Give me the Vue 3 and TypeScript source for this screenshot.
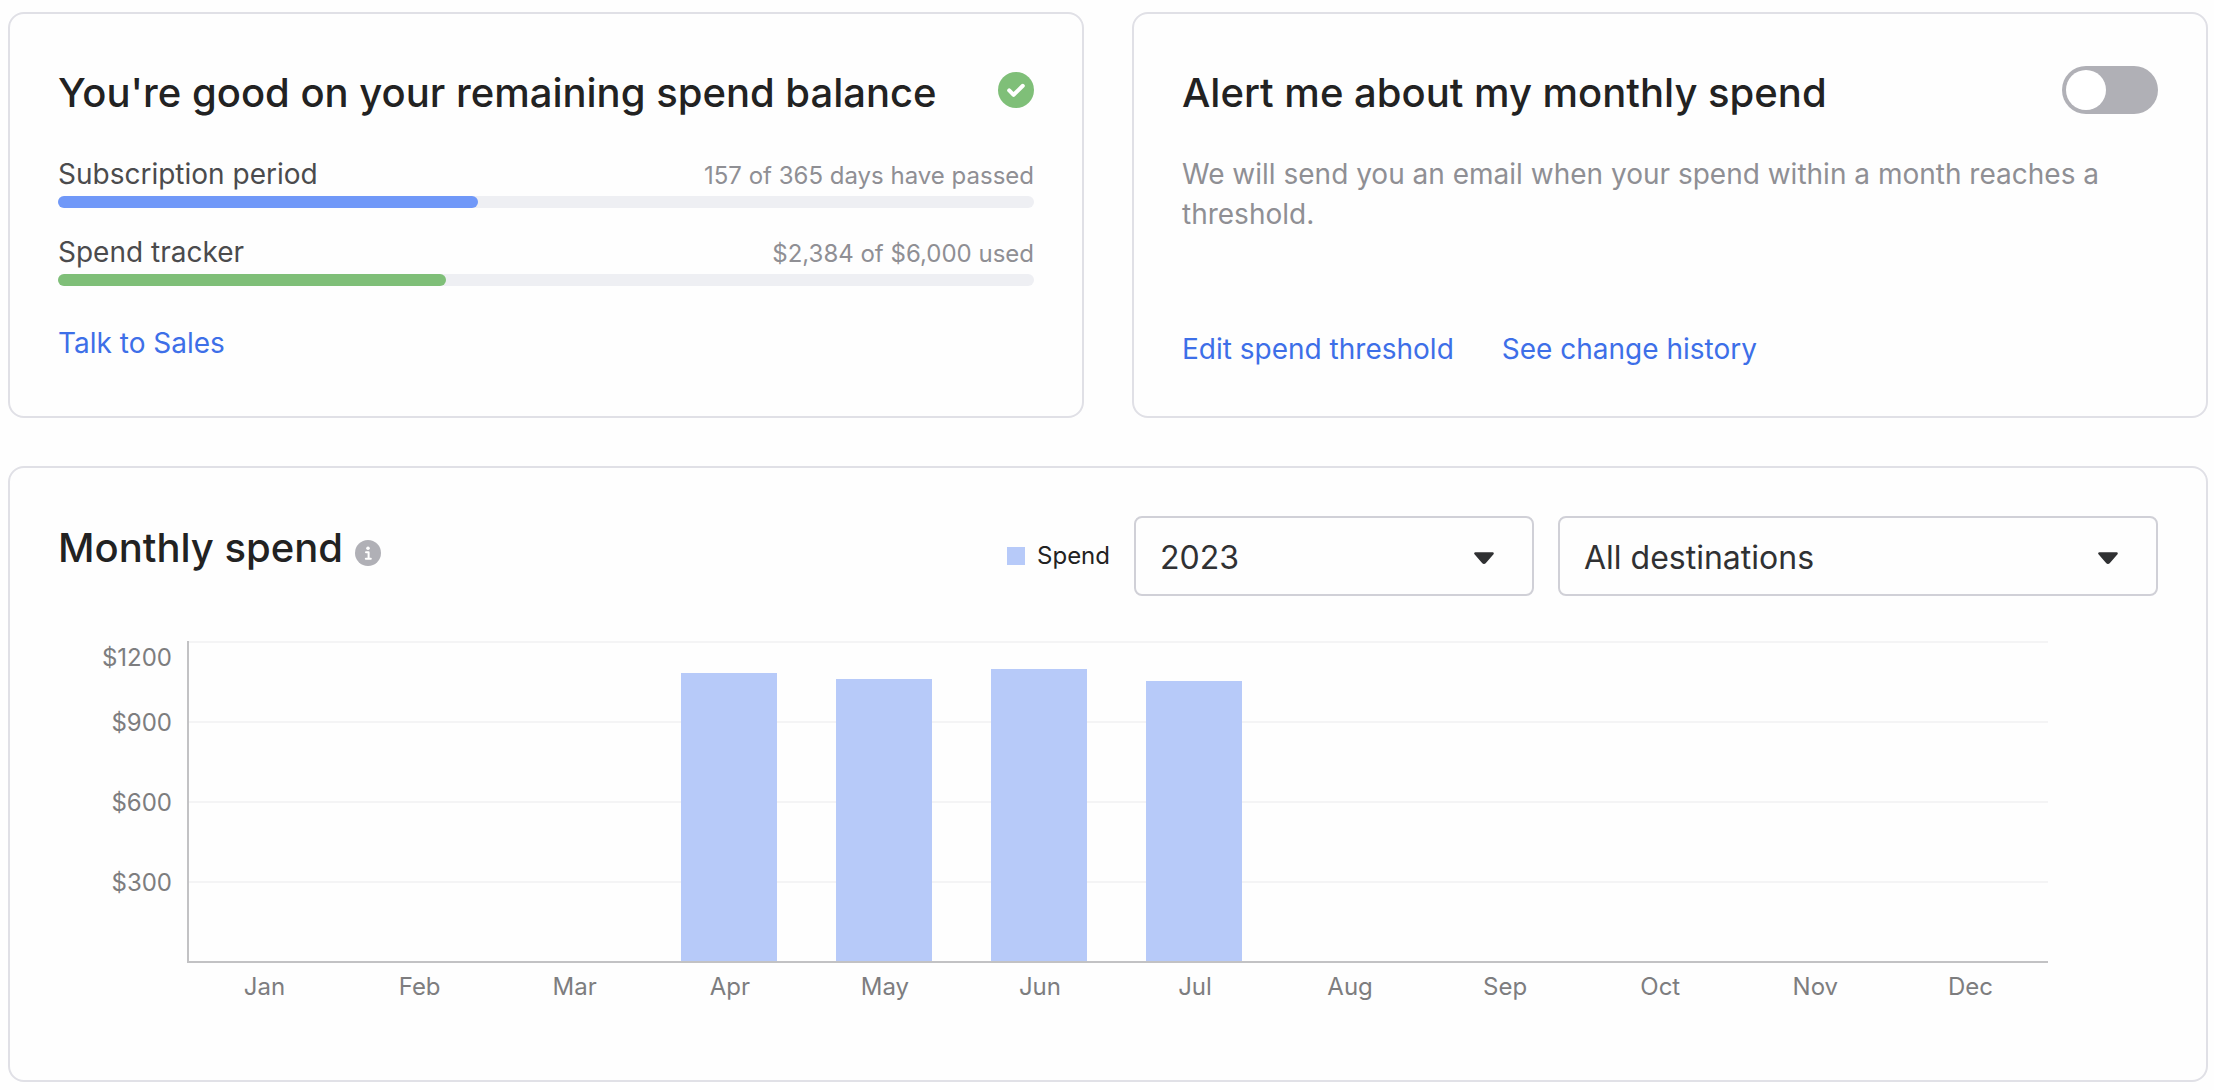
<script setup lang="ts">
import { computed, ref } from 'vue'

interface Meter {
  id: string
  label: string
  caption: string
  value: number
  max: number
  tone: 'blue' | 'green'
}

interface MonthSpend {
  month: string
  amount: number
}

const meters: Meter[] = [
  { id: 'period', label: 'Subscription period', caption: '157 of 365 days have passed', value: 157, max: 365, tone: 'blue' },
  { id: 'spend', label: 'Spend tracker', caption: '$2,384 of $6,000 used', value: 2384, max: 6000, tone: 'green' },
]

const alertEnabled = ref(false)
const year = ref('2023')
const destination = ref('All destinations')

const scaleMax = 1200
const ticks = [1200, 900, 600, 300]

const months: MonthSpend[] = [
  { month: 'Jan', amount: 0 },
  { month: 'Feb', amount: 0 },
  { month: 'Mar', amount: 0 },
  { month: 'Apr', amount: 1080 },
  { month: 'May', amount: 1058 },
  { month: 'Jun', amount: 1095 },
  { month: 'Jul', amount: 1050 },
  { month: 'Aug', amount: 0 },
  { month: 'Sep', amount: 0 },
  { month: 'Oct', amount: 0 },
  { month: 'Nov', amount: 0 },
  { month: 'Dec', amount: 0 },
]

const bars = computed(() =>
  months.map((m) => ({ ...m, height: `${(m.amount / scaleMax) * 100}%` })),
)
</script>

<template>
  <main class="page">
    <div class="cards">
      <section class="card">
        <header class="card-header">
          <h2 class="title">You're good on your remaining spend balance</h2>
          <svg class="status" viewBox="0 0 36 36" role="img" aria-label="On track">
            <circle cx="18" cy="18" r="18" fill="#7fbf78" />
            <path d="M11.2 18.4l4.4 4.4 9.2-9" fill="none" stroke="#fff" stroke-width="4" stroke-linecap="round" stroke-linejoin="round" />
          </svg>
        </header>
        <div v-for="m in meters" :key="m.id" class="meter">
          <div class="meter-text">
            <span :id="`${m.id}-label`" class="meter-label">{{ m.label }}</span>
            <span class="meter-caption">{{ m.caption }}</span>
          </div>
          <div
            class="track"
            role="progressbar"
            :aria-labelledby="`${m.id}-label`"
            :aria-valuenow="m.value"
            aria-valuemin="0"
            :aria-valuemax="m.max"
          >
            <div class="fill" :class="m.tone" :style="{ width: `${(m.value / m.max) * 100}%` }"></div>
          </div>
        </div>
        <nav class="links sales">
          <a href="#sales">Talk to Sales</a>
        </nav>
      </section>

      <section class="card">
        <header class="card-header">
          <h2 class="title"><label for="alert-toggle">Alert me about my monthly spend</label></h2>
          <input id="alert-toggle" v-model="alertEnabled" class="toggle" type="checkbox" role="switch" />
        </header>
        <p class="description">We will send you an email when your spend within a month reaches a threshold.</p>
        <nav class="links alerts">
          <a href="#threshold">Edit spend threshold</a>
          <a href="#history">See change history</a>
        </nav>
      </section>
    </div>

    <section class="card spend">
      <header class="spend-header">
        <div class="spend-title">
          <h2 class="title">Monthly spend</h2>
          <button class="info" type="button" aria-label="About monthly spend">
            <svg viewBox="0 0 26 26" aria-hidden="true">
              <circle cx="13" cy="13" r="13" fill="#b0b0b6" />
              <circle cx="13" cy="8.2" r="1.8" fill="#fff" />
              <path d="M11 12.2h2.6v6M10.8 18.8h5" fill="none" stroke="#fff" stroke-width="2" stroke-linecap="round" stroke-linejoin="round" />
            </svg>
          </button>
        </div>
        <div class="legend"><span class="swatch"></span>Spend</div>
        <div class="select year">
          <select v-model="year" aria-label="Year">
            <option>2023</option>
            <option>2022</option>
          </select>
          <svg class="caret" viewBox="0 0 20 12" aria-hidden="true">
            <path d="M1.4 1.4h17.2l-7.6 8.8q-1 1.2-2 0z" fill="#303133" stroke="#303133" stroke-width="2.4" stroke-linejoin="round" />
          </svg>
        </div>
        <div class="select destination">
          <select v-model="destination" aria-label="Destination">
            <option>All destinations</option>
          </select>
          <svg class="caret" viewBox="0 0 20 12" aria-hidden="true">
            <path d="M1.4 1.4h17.2l-7.6 8.8q-1 1.2-2 0z" fill="#303133" stroke="#303133" stroke-width="2.4" stroke-linejoin="round" />
          </svg>
        </div>
      </header>

      <div class="chart">
        <ul class="y-axis">
          <li v-for="t in ticks" :key="t">${{ t }}</li>
        </ul>
        <div class="plot">
          <div class="gridlines" aria-hidden="true">
            <div v-for="t in ticks" :key="t" class="gridline"></div>
          </div>
          <div class="bars">
            <div v-for="b in bars" :key="b.month" class="slot">
              <div class="bar" :style="{ height: b.height }"></div>
            </div>
          </div>
        </div>
        <ul class="x-axis">
          <li v-for="b in bars" :key="b.month">{{ b.month }}</li>
        </ul>
      </div>
    </section>
  </main>
</template>

<style>
body {
  margin: 0;
  background: #fefefe;
}
</style>

<style scoped>
.page {
  box-sizing: border-box;
  padding: 12px 6px 8px 8px;
  font-family: Inter, "Open Sans", sans-serif;
  font-weight: 400;
  color: #222;
}

.cards {
  display: grid;
  grid-template-columns: 1fr 1fr;
  gap: 48px;
  margin-bottom: 48px;
}

.card {
  box-sizing: border-box;
  display: flex;
  flex-direction: column;
  padding: 52px 48px 47px;
  border: 2px solid #e0e0e6;
  border-radius: 16px;
}

.card-header {
  display: flex;
  align-items: center;
  justify-content: space-between;
  min-height: 48px;
  margin-bottom: 40px;
}

.title {
  margin: 0;
  padding-top: 6px;
  font-size: 40px;
  line-height: 42px;
  font-weight: 500;
}

.status {
  flex: none;
  width: 36px;
  height: 36px;
}

.meter {
  margin-bottom: 24px;
}

.meter-text {
  display: flex;
  align-items: baseline;
  justify-content: space-between;
  height: 40px;
  margin-bottom: 2px;
  line-height: 40px;
}

.meter-label {
  font-size: 28px;
  color: #4b4b4d;
}

.meter-caption {
  font-size: 24px;
  color: #8f8f94;
}

.track {
  height: 12px;
  border-radius: 6px;
  background: #eeeff3;
}

.fill {
  height: 12px;
  border-radius: 6px;
}

.blue {
  background: #7098f8;
}

.green {
  background: #7fbf78;
}

.links {
  display: flex;
  gap: 48px;
  font-size: 28px;
  line-height: 40px;
}

.links a {
  color: #3d6fe8;
  text-decoration: none;
}

.sales {
  margin-top: 13px;
}

.alerts {
  margin-top: 95px;
}

.description {
  margin: 0;
  font-size: 28px;
  line-height: 40px;
  color: #8f8f94;
}

.toggle {
  appearance: none;
  flex: none;
  display: flex;
  box-sizing: border-box;
  width: 96px;
  height: 48px;
  margin: 0;
  padding: 4px;
  border-radius: 24px;
  background: #b0b0b6;
  cursor: pointer;
}

.toggle::before {
  content: "";
  width: 40px;
  height: 40px;
  border-radius: 50%;
  background: #fff;
}

.toggle:checked {
  justify-content: flex-end;
  background: #7098f8;
}

.spend {
  padding: 48px 48px 77px;
}

.spend-header {
  display: flex;
  align-items: center;
  gap: 24px;
  margin-bottom: 45px;
}

.spend-title {
  display: flex;
  align-items: center;
  gap: 12px;
  margin-right: auto;
  padding-bottom: 22px;
}

.info {
  display: flex;
  margin: 16px 0 0;
  padding: 0;
  border: 0;
  background: none;
}

.info svg {
  width: 26px;
  height: 26px;
}

.legend {
  display: flex;
  align-items: center;
  gap: 12px;
  font-size: 24px;
  line-height: 32px;
}

.swatch {
  width: 18px;
  height: 18px;
  background: #b7caf9;
}

.select {
  position: relative;
  flex: 0 1 auto;
}

.year {
  width: 400px;
}

.destination {
  width: 600px;
}

.select select {
  appearance: none;
  box-sizing: border-box;
  width: 100%;
  height: 80px;
  margin: 0;
  padding: 2px 72px 0 24px;
  border: 2px solid #d0d0d7;
  border-radius: 8px;
  background: #fefefe;
  font-family: inherit;
  font-size: 32px;
  font-weight: inherit;
  color: #303133;
}

.caret {
  position: absolute;
  top: 36px;
  right: 40px;
  width: 20px;
  height: 12px;
  pointer-events: none;
}

.chart {
  display: grid;
  grid-template-columns: 129px 1fr;
  margin-right: 110px;
  font-size: 24px;
  line-height: 32px;
  color: #7d7d7f;
}

.y-axis,
.x-axis {
  margin: 0;
  padding: 0;
  list-style: none;
}

.y-axis {
  padding-top: 1px;
  padding-right: 15px;
  text-align: right;
}

.y-axis li {
  height: 80px;
  line-height: 80px;
}

.y-axis li:first-child {
  height: 41px;
  line-height: 32px;
}

.plot {
  display: grid;
  grid-template: 320px / 1fr;
  border-left: 2px solid #c2c2c4;
  border-bottom: 2px solid #c2c2c4;
}

.gridlines,
.bars {
  grid-area: 1 / 1;
  display: flex;
}

.gridlines {
  flex-direction: column;
}

.gridline {
  flex: 1;
  border-top: 2px solid #f4f4f5;
}

.slot {
  flex: 1;
  display: flex;
  align-items: flex-end;
  justify-content: center;
}

.bar {
  width: 62%;
  margin-right: 4px;
  background: #b7caf9;
}

.x-axis {
  grid-column: 2;
  display: flex;
  padding-top: 8px;
}

.x-axis li {
  flex: 1;
  text-align: center;
}
</style>
